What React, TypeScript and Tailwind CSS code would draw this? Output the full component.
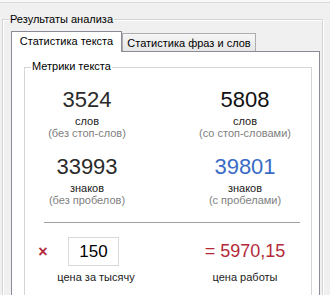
export default function App() {
  return (
    <div className="w-[330px] h-[295px] overflow-hidden bg-[#f0f0f0] font-['Liberation_Sans',Arial,sans-serif] text-[11px] leading-[13px] text-black">
      <div className="h-[2px] bg-[#f8f8f8]" />
      <div className="h-px bg-[#dadada]" />
      <div className="ml-[2px] mt-[16px] w-[321px] h-[400px] border border-[#d5d5d5] shadow-[inset_1px_1px_0_#fff,1px_1px_0_#fff] flex flex-col">
        <span className="-mt-[7px] ml-[6px] self-start px-px bg-[#f0f0f0] leading-[13px]">Результаты анализа</span>
        <div className="ml-[8px] mt-[5px] w-[309px] flex flex-col">
          <div className="flex items-end h-[20px]">
            <div className="relative z-10 -mb-px h-[21px] w-[111px] border border-b-0 border-[#898c95] bg-white pt-[3px] text-center">
              Статистика текста
            </div>
            <div className="h-[18px] w-[134px] border border-b-0 border-[#adadad] bg-gradient-to-b from-[#f6f6f6] to-[#e6e6e6] pt-[3px] text-center">
              Статистика фраз и слов
            </div>
          </div>
          <div className="h-[300px] border border-[#898c95] bg-white flex flex-col">
            <div className="ml-[12px] mt-[15px] w-[288px] h-[300px] border border-[#d5d5d5] flex flex-col">
              <span className="-mt-[8px] ml-[6px] self-start px-px bg-white leading-[13px]">Метрики текста</span>
              <div className="mt-[13px] grid grid-cols-[124px_132px] gap-x-[30px] gap-y-[14px] text-center">
                <Metric value="3524" color="text-[#2b2b2b]" label="слов" note="(без стоп-слов)" />
                <Metric value="5808" color="text-[#111111]" label="слов" note="(со стоп-словами)" />
                <Metric value="33993" color="text-[#2b2b2b]" label="знаков" note="(без пробелов)" />
                <Metric value="39801" color="text-[#3a6cc6]" label="знаков" note="(с пробелами)" />
              </div>
              <div className="ml-[19px] mt-[16px] w-[256px] h-px bg-[#a0a0a0]" />
              <div className="mt-[14px] flex">
                <div className="w-[124px] flex">
                  <span className="ml-[14px] w-[8px] h-[29px] flex items-center justify-center text-[16px] font-bold text-[#b22a3a]">×</span>
                  <div className="ml-[4px] w-[90px] flex flex-col items-center">
                    <input
                      readOnly
                      value="150"
                      className="mr-[5px] w-[51px] h-[29px] border border-[#d9d9d9] bg-white text-center text-[17px] text-black outline-none"
                    />
                    <span className="mt-[5px] leading-[12px] text-[#1a1a1a]">цена за тысячу</span>
                  </div>
                </div>
                <div className="ml-[30px] w-[132px] flex flex-col items-center">
                  <span className="h-[29px] leading-[29px] text-[18px] text-[#b22a3a]">= 5970,15</span>
                  <span className="mt-[5px] leading-[12px] text-[#1a1a1a]">цена работы</span>
                </div>
              </div>
            </div>
          </div>
        </div>
      </div>
    </div>
  );
}

function Metric({ value, color, label, note }: { value: string; color: string; label: string; note: string }) {
  return (
    <div className="flex flex-col items-center">
      <span className={`text-[22px] leading-[28px] ${color}`}>{value}</span>
      <span className="mt-px leading-[12px] text-[#1a1a1a]">{label}</span>
      <span className="leading-[12px] text-[#808080]">{note}</span>
    </div>
  );
}
